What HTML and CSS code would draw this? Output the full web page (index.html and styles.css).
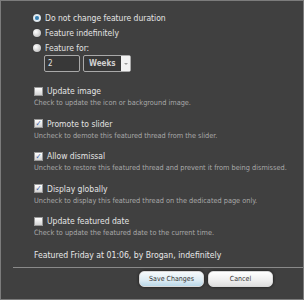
FILE: index.html
```html
<!DOCTYPE html>
<html lang="en">
<head>
    <meta charset="UTF-8">
    <title>Feature thread</title>
    <link rel="stylesheet" href="styles.css">
</head>
<body>
    <div class="dialog">
        <div class="duration">
            <div class="radio-row"><span class="radio checked"></span>Do not change feature duration</div>
            <div class="radio-row"><span class="radio"></span>Feature indefinitely</div>
            <div class="radio-row"><span class="radio"></span>Feature for:</div>
            <div class="for-row">
                <div class="num">2</div>
                <div class="select">Weeks<span class="arrow"></span></div>
            </div>
        </div>

        <div class="options">
            <div class="option">
                <div class="label"><span class="box"></span>Update image</div>
                <div class="hint">Check to update the icon or background image.</div>
            </div>
            <div class="option">
                <div class="label"><span class="box checked">&#10003;</span>Promote to slider</div>
                <div class="hint">Uncheck to demote this featured thread from the slider.</div>
            </div>
            <div class="option">
                <div class="label"><span class="box checked">&#10003;</span>Allow dismissal</div>
                <div class="hint">Uncheck to restore this featured thread and prevent it from being dismissed.</div>
            </div>
            <div class="option">
                <div class="label"><span class="box checked">&#10003;</span>Display globally</div>
                <div class="hint">Uncheck to display this featured thread on the dedicated page only.</div>
            </div>
            <div class="option">
                <div class="label"><span class="box"></span>Update featured date</div>
                <div class="hint">Check to update the featured date to the current time.</div>
            </div>
        </div>

        <div class="featured">Featured Friday at 01:06, by Brogan, indefinitely</div>

        <div class="actions">
            <button class="btn primary">Save Changes</button>
            <button class="btn">Cancel</button>
        </div>
    </div>
</body>
</html>
```

FILE: styles.css
```css
body {
    margin: 0;
    background: #404040;
    font-family: 'DejaVu Sans Condensed', 'DejaVu Sans', sans-serif;
    color: #e4e4e4;
}

.dialog {
    width: 302px;
    height: 298px;
    border: 1px solid #7c7c7c;
    background: #404040;
    overflow: hidden;
}

.duration {
    padding: 9px 0 0 32px;
}

.radio-row {
    display: flex;
    align-items: center;
    height: 15px;
    font-size: 8.5px;
}

.radio {
    width: 8px;
    height: 8px;
    border-radius: 50%;
    margin-right: 4px;
    background: radial-gradient(circle at 35% 35%, #ffffff, #c8c8c8 70%, #9a9a9a);
    box-shadow: 0 0 1px #222;
}

.radio.checked {
    background: radial-gradient(circle, #2d6f9a 0, #4a90c0 30%, #e6eef3 45%, #b7c4cc 100%);
}

.for-row {
    display: flex;
    gap: 3px;
    padding-left: 11px;
    height: 17px;
}

.num {
    width: 31px;
    height: 15px;
    border: 1px solid #a9a9a9;
    border-radius: 2px;
    background: #383838;
    font-size: 8px;
    line-height: 15px;
    padding-left: 3px;
}

.select {
    position: relative;
    width: 41px;
    height: 15px;
    border: 1px solid #a9a9a9;
    border-radius: 2px;
    background: #383838;
    font-size: 8px;
    font-weight: bold;
    color: #d0d0d0;
    line-height: 15px;
    padding-left: 5px;
}

.arrow {
    position: absolute;
    right: 0;
    top: 0;
    width: 9px;
    height: 15px;
    background: #f2f2f2;
}

.arrow::after {
    content: "";
    position: absolute;
    left: 3px;
    top: 7px;
    border-left: 2px solid transparent;
    border-right: 2px solid transparent;
    border-top: 2px solid #999;
}

.options {
    margin-top: 13px;
}

.option {
    padding-left: 33px;
    margin-bottom: 8.5px;
}

.label {
    display: flex;
    align-items: center;
    height: 12px;
    font-size: 8.5px;
}

.box {
    width: 7px;
    height: 7px;
    margin-right: 4px;
    border: 1px solid #9a9a9a;
    background: linear-gradient(#ffffff, #d4d4d4);
    color: #3d5fa8;
    font-size: 8px;
    font-weight: bold;
    line-height: 7px;
    text-align: center;
}

.hint {
    height: 12px;
    line-height: 12px;
    font-size: 7.3px;
    color: #a8a8a8;
}

.featured {
    padding-left: 33px;
    margin-top: 2px;
    line-height: 14px;
    font-size: 8.6px;
    color: #e8e8e8;
}

.actions {
    display: flex;
    justify-content: flex-end;
    gap: 4px;
    margin: 5px 0 0 12px;
    padding: 3px 30px 0 0;
    border-top: 1px solid #8a8a8a;
}

.btn {
    width: 65px;
    height: 16px;
    padding: 0;
    border: 1px solid #d8d8d8;
    border-radius: 5px;
    background: linear-gradient(#ffffff, #eeeeee 60%, #dedede);
    box-shadow: 0 0 3px #151515;
    font-family: inherit;
    font-size: 7px;
    color: #333;
}

.btn.primary {
    background: linear-gradient(#f6fafc, #dcebf3 60%, #b9d7e8);
}
```
